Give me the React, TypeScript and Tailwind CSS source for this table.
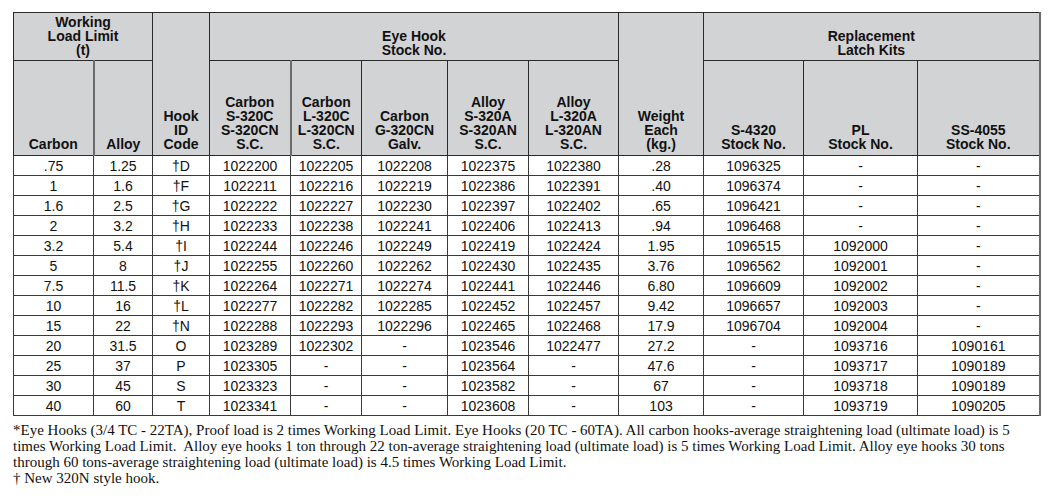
const rows: string[][] = [
  [".75", "1.25", "†D", "1022200", "1022205", "1022208", "1022375", "1022380", ".28", "1096325", "-", "-"],
  ["1", "1.6", "†F", "1022211", "1022216", "1022219", "1022386", "1022391", ".40", "1096374", "-", "-"],
  ["1.6", "2.5", "†G", "1022222", "1022227", "1022230", "1022397", "1022402", ".65", "1096421", "-", "-"],
  ["2", "3.2", "†H", "1022233", "1022238", "1022241", "1022406", "1022413", ".94", "1096468", "-", "-"],
  ["3.2", "5.4", "†I", "1022244", "1022246", "1022249", "1022419", "1022424", "1.95", "1096515", "1092000", "-"],
  ["5", "8", "†J", "1022255", "1022260", "1022262", "1022430", "1022435", "3.76", "1096562", "1092001", "-"],
  ["7.5", "11.5", "†K", "1022264", "1022271", "1022274", "1022441", "1022446", "6.80", "1096609", "1092002", "-"],
  ["10", "16", "†L", "1022277", "1022282", "1022285", "1022452", "1022457", "9.42", "1096657", "1092003", "-"],
  ["15", "22", "†N", "1022288", "1022293", "1022296", "1022465", "1022468", "17.9", "1096704", "1092004", "-"],
  ["20", "31.5", "O", "1023289", "1022302", "-", "1023546", "1022477", "27.2", "-", "1093716", "1090161"],
  ["25", "37", "P", "1023305", "-", "-", "1023564", "-", "47.6", "-", "1093717", "1090189"],
  ["30", "45", "S", "1023323", "-", "-", "1023582", "-", "67", "-", "1093718", "1090189"],
  ["40", "60", "T", "1023341", "-", "-", "1023608", "-", "103", "-", "1093719", "1090205"],
];

const widths = [80, 59, 57, 81, 71, 86, 81, 90, 85, 100, 114, 122];

const th = "border border-[#2a2a2a] align-bottom text-center font-bold pb-[3px] leading-[14px]";

export default function App() {
  return (
    <div className="min-h-screen bg-white pl-[13px] pt-[12px] text-[#111]">
      <table
        className="table-fixed border-collapse w-[1026px] text-[14px]"
        style={{ fontFamily: '"Liberation Sans", Arial, sans-serif' }}
      >
        <colgroup>
          {widths.map((w, i) => (
            <col key={i} style={{ width: w }} />
          ))}
        </colgroup>
        <thead className="bg-[#d2d3d5]">
          <tr className="h-[48px]">
            <th colSpan={2} className={th}>
              Working
              <br />
              Load Limit
              <br />
              (t)
            </th>
            <th rowSpan={2} className={th + " pb-[4px]"}>
              Hook
              <br />
              ID
              <br />
              Code
            </th>
            <th colSpan={5} className={th}>
              Eye Hook
              <br />
              Stock No.
            </th>
            <th rowSpan={2} className={th + " pb-[4px]"}>
              Weight
              <br />
              Each
              <br />
              (kg.)
            </th>
            <th colSpan={3} className={th + " border-r-2 border-r-[#6b6b6b]"}>
              Replacement
              <br />
              Latch Kits
            </th>
          </tr>
          <tr className="h-[95px]">
            <th className={th + " pb-[4px]"}>Carbon</th>
            <th className={th + " pb-[4px] border-l-2 border-l-[#6b6b6b]"}>Alloy</th>
            <th className={th + " pb-[4px]"}>
              Carbon
              <br />
              S-320C
              <br />
              S-320CN
              <br />
              S.C.
            </th>
            <th className={th + " pb-[4px] border-l-2 border-l-[#6b6b6b]"}>
              Carbon
              <br />
              L-320C
              <br />
              L-320CN
              <br />
              S.C.
            </th>
            <th className={th + " pb-[4px]"}>
              Carbon
              <br />
              G-320CN
              <br />
              Galv.
            </th>
            <th className={th + " pb-[4px]"}>
              Alloy
              <br />
              S-320A
              <br />
              S-320AN
              <br />
              S.C.
            </th>
            <th className={th + " pb-[4px]"}>
              Alloy
              <br />
              L-320A
              <br />
              L-320AN
              <br />
              S.C.
            </th>
            <th className={th + " pb-[4px]"}>
              S-4320
              <br />
              Stock No.
            </th>
            <th className={th + " pb-[4px]"}>
              PL
              <br />
              Stock No.
            </th>
            <th className={th + " pb-[4px] border-r-2 border-r-[#6b6b6b]"}>
              SS-4055
              <br />
              Stock No.
            </th>
          </tr>
        </thead>
        <tbody>
          {rows.map((r, i) => (
            <tr key={i} className="h-[20px]">
              {r.map((c, j) => (
                <td
                  key={j}
                  className={
                    "border border-[#3a3a3a] text-center leading-[18px] p-0" +
                    (j === 11 ? " border-r-2 border-r-[#6b6b6b]" : "")
                  }
                >
                  {c}
                </td>
              ))}
            </tr>
          ))}
        </tbody>
      </table>
      <div
        className="mt-[6px] w-[1040px] text-[15px] leading-[16px] text-[#111]"
        style={{ fontFamily: '"Liberation Serif", "Times New Roman", serif' }}
      >
        <p>
          *Eye Hooks (3/4 TC - 22TA), Proof load is 2 times Working Load Limit. Eye Hooks (20 TC - 60TA). All carbon
          hooks-average straightening load (ultimate load) is 5
          <br />
          times Working Load Limit.&nbsp; Alloy eye hooks 1 ton through 22 ton-average straightening load (ultimate load) is 5
          times Working Load Limit. Alloy eye hooks 30 tons
          <br />
          through 60 tons-average straightening load (ultimate load) is 4.5 times Working Load Limit.
        </p>
        <p>† New 320N style hook.</p>
      </div>
    </div>
  );
}
